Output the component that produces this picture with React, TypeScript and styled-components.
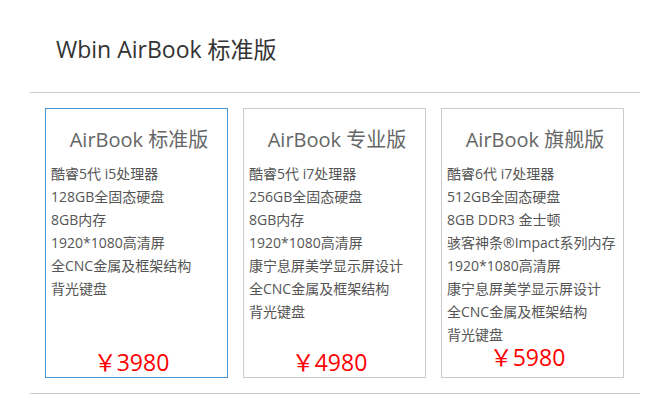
import React from "react";
import styled, { createGlobalStyle } from "styled-components";

const Global = createGlobalStyle`
  html, body { margin: 0; padding: 0; background: #fff; }
  body { font-family: "Open Sans", "Noto Sans CJK SC", sans-serif; }
`;

const Page = styled.div`
  width: 645px;
  height: 401px;
  overflow: hidden;
`;

const Heading = styled.h1`
  margin: 0;
  padding: 34px 0 28px 56px;
  font-size: 23px;
  font-weight: 400;
  line-height: 30px;
  color: #333;
`;

const Section = styled.div`
  margin: 0 5px 0 30px;
  border-top: 1px solid #ccc;
  border-bottom: 1px solid #ccc;
  padding: 15px 0 15px 15px;
  display: flex;
  gap: 15px;
`;

const Card = styled.div<{ $active?: boolean }>`
  width: 183px;
  height: 270px;
  box-sizing: border-box;
  border: 1px solid ${(p) => (p.$active ? "#4a96d2" : "#ccc")};
  display: flex;
  flex-direction: column;
  padding: 16px 0 0 5px;
`;

const CardTitle = styled.h2`
  margin: 0;
  text-align: center;
  font-size: 20px;
  font-weight: 400;
  line-height: 30px;
  color: #666;
`;

const Features = styled.ul<{ $fill?: boolean }>`
  list-style: none;
  margin: 7px 0 0;
  padding: 0;
  flex: ${(p) => (p.$fill ? "0 0 auto" : "1")};
`;

const Feature = styled.li`
  font-size: 14px;
  line-height: 23px;
  color: #555;
  white-space: nowrap;
`;

const Price = styled.div`
  text-align: center;
  font-size: 23px;
  line-height: 22px;
  color: #f00;
  padding-bottom: 4px;
  padding-right: 15px;
`;

const cards = [
  {
    name: "AirBook 标准版",
    active: true,
    price: "3980",
    features: [
      "酷睿5代 i5处理器",
      "128GB全固态硬盘",
      "8GB内存",
      "1920*1080高清屏",
      "全CNC金属及框架结构",
      "背光键盘",
    ],
  },
  {
    name: "AirBook 专业版",
    price: "4980",
    features: [
      "酷睿5代 i7处理器",
      "256GB全固态硬盘",
      "8GB内存",
      "1920*1080高清屏",
      "康宁息屏美学显示屏设计",
      "全CNC金属及框架结构",
      "背光键盘",
    ],
  },
  {
    name: "AirBook 旗舰版",
    price: "5980",
    fill: true,
    features: [
      "酷睿6代 i7处理器",
      "512GB全固态硬盘",
      "8GB DDR3 金士顿",
      "骇客神条®Impact系列内存",
      "1920*1080高清屏",
      "康宁息屏美学显示屏设计",
      "全CNC金属及框架结构",
      "背光键盘",
    ],
  },
];

export default function App() {
  return (
    <Page>
      <Global />
      <Heading>Wbin AirBook 标准版</Heading>
      <Section>
        {cards.map((c) => (
          <Card key={c.name} $active={c.active}>
            <CardTitle>{c.name}</CardTitle>
            <Features $fill={c.fill}>
              {c.features.map((f) => (
                <Feature key={f}>{f}</Feature>
              ))}
            </Features>
            <Price>￥{c.price}</Price>
          </Card>
        ))}
      </Section>
    </Page>
  );
}
